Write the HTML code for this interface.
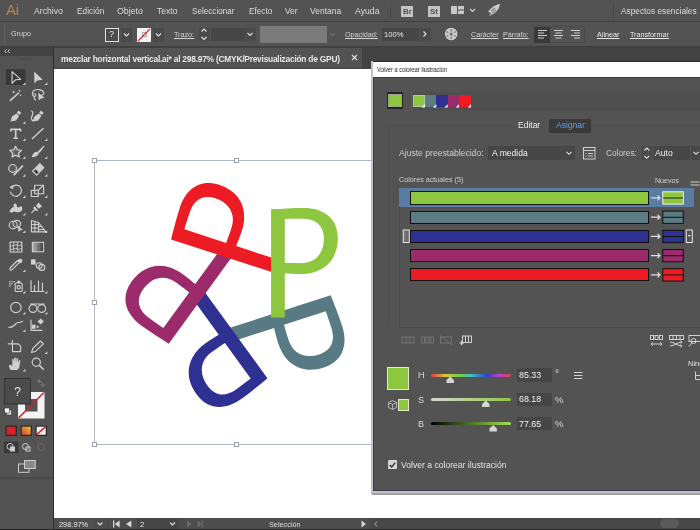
<!DOCTYPE html>
<html><head><meta charset="utf-8">
<style>
*{box-sizing:border-box}
html,body{margin:0;padding:0}
body{width:700px;height:530px;overflow:hidden;position:relative;background:#535353;font-family:"Liberation Sans",sans-serif;color:#d8d8d8}
.a{position:absolute}
.t{position:absolute;white-space:nowrap;line-height:1;will-change:transform}
</style></head><body>
<!-- MENU BAR -->
<div class="a" style="left:0;top:0;width:700px;height:21px;background:#535353"></div>
<div class="a" style="left:0;top:21px;width:700px;height:1px;background:#404040"></div>
<div class="t" style="left:6px;top:2px;font-size:15px;color:#b98257;letter-spacing:-0.3px">Ai</div>
<div class="t" style="left:34px;top:6.89px;font-size:8.64px;color:#dcdcdc">Archivo</div>
<div class="t" style="left:77px;top:7.16px;font-size:8.32px;color:#dcdcdc">Edición</div>
<div class="t" style="left:117px;top:6.75px;font-size:8.80px;color:#dcdcdc">Objeto</div>
<div class="t" style="left:157px;top:6.94px;font-size:8.58px;color:#dcdcdc">Texto</div>
<div class="t" style="left:192px;top:7.8px;font-size:8.15px;color:#dcdcdc">Seleccionar</div>
<div class="t" style="left:248.5px;top:7.8px;font-size:8.20px;color:#dcdcdc">Efecto</div>
<div class="t" style="left:285px;top:7.09px;font-size:8.40px;color:#dcdcdc">Ver</div>
<div class="t" style="left:310px;top:7.00px;font-size:8.51px;color:#dcdcdc">Ventana</div>
<div class="t" style="left:355px;top:6.84px;font-size:8.70px;color:#dcdcdc">Ayuda</div>
<div class="a" style="left:390px;top:4px;width:1px;height:14px;background:#474747"></div>
<div class="a" style="left:401px;top:5.5px;width:12px;height:11px;background:#c4c4c4"></div>
<div class="t" style="left:402.5px;top:7.5px;font-size:8px;font-weight:bold;color:#535353">Br</div>
<div class="a" style="left:427.5px;top:5.5px;width:12px;height:11px;background:#c4c4c4"></div>
<div class="t" style="left:429.5px;top:7.5px;font-size:8px;font-weight:bold;color:#535353">St</div>
<svg class="a" style="left:450px;top:5px" width="30" height="13" viewBox="0 0 30 13">
<rect x="1" y="1" width="6" height="8" fill="#c8c8c8"/><rect x="8" y="1" width="6" height="3.5" fill="#c8c8c8"/><rect x="8" y="5.5" width="6" height="3.5" fill="#c8c8c8"/>
<path d="M20,4 L22.5,6.5 L25,4" stroke="#d0d0d0" stroke-width="1.2" fill="none"/>
</svg>
<svg class="a" style="left:486px;top:3px" width="16" height="15" viewBox="0 0 16 15">
<path d="M14,1 C10,1.5 5,4 2,9 L5,10 L3,13 L7,11 C11,9 13.5,5 14,1 Z" fill="#c8c8c8"/>
<path d="M5,8 L9,5 M6,10 L10,7" stroke="#535353" stroke-width="0.9"/>
</svg>
<div class="a" style="left:612.5px;top:4px;width:1px;height:14px;background:#474747"></div>
<div class="t" style="left:621px;top:7.17px;font-size:8.31px;color:#dcdcdc">Aspectos esenciales</div>
<!-- CONTROL BAR -->
<div class="a" style="left:0;top:22px;width:700px;height:24px;background:#535353"></div>
<div class="a" style="left:0;top:46px;width:700px;height:1px;background:#3e3e3e"></div>
<div class="a" style="left:4px;top:24px;width:1px;height:20px;background:#5e5e5e"></div>
<div class="t" style="left:11px;top:30.2px;font-size:7.2px;color:#d4d4d4">Grupo</div>
<div class="a" style="left:105px;top:27.5px;width:14px;height:14px;border:1.3px solid #e0e0e0;background:#4c4c4c"></div>
<div class="t" style="left:109.3px;top:30.2px;font-size:9px;color:#e0e0e0">?</div>
<div class="a" style="left:121px;top:27.5px;width:11px;height:14px;background:#4a4a4a"></div>
<div class="a" style="left:137px;top:27.5px;width:14px;height:14px;background:#f4f4f4"></div>
<div class="a" style="left:141.8px;top:32.3px;width:5px;height:5px;border:1px solid #aaa"></div>
<svg class="a" style="left:137px;top:27.5px" width="14" height="14"><path d="M1,13 L13,1" stroke="#c52a2e" stroke-width="1.1"/></svg>
<div class="a" style="left:153px;top:27.5px;width:11px;height:14px;background:#4a4a4a"></div>

<div class="t" style="left:174px;top:31.3px;font-size:7.2px;color:#d4d4d4;text-decoration:underline;text-underline-offset:1px">Trazo:</div>
<div class="a" style="left:198.5px;top:27.5px;width:11px;height:13px;background:#4a4a4a"></div>
<div class="a" style="left:210.5px;top:27.5px;width:33px;height:13px;background:#464646"></div>
<div class="a" style="left:244px;top:27.5px;width:12px;height:13px;background:#4a4a4a"></div>
<div class="a" style="left:260px;top:26px;width:66.5px;height:16.5px;background:#7b7b7b"></div>
<div class="t" style="left:345px;top:31.3px;font-size:7.2px;color:#d4d4d4;text-decoration:underline;text-underline-offset:1px">Opacidad:</div>
<div class="a" style="left:381.5px;top:27.5px;width:37px;height:13px;background:#464646"></div>
<div class="t" style="left:384px;top:30.8px;font-size:7.6px;color:#e8e8e8">100%</div>
<div class="a" style="left:419.5px;top:27.5px;width:11px;height:13px;background:#4a4a4a"></div>
<svg class="a" style="left:444px;top:27px" width="15" height="15" viewBox="0 0 15 15">
<circle cx="7.2" cy="7" r="6.2" fill="#cfcfcf"/>
<circle cx="7.2" cy="7" r="1.6" fill="#6a6a6a"/>
<g fill="#8a8a8a"><circle cx="7.2" cy="3.2" r="1.2"/><circle cx="7.2" cy="10.8" r="1.2"/><circle cx="3.6" cy="5.2" r="1.1"/><circle cx="10.8" cy="5.2" r="1.1"/><circle cx="3.6" cy="9" r="1.1"/><circle cx="10.8" cy="9" r="1.1"/></g>
</svg>
<div class="t" style="left:470.5px;top:31.3px;font-size:7.2px;color:#d4d4d4;text-decoration:underline;text-underline-offset:1px">Carácter</div>
<div class="t" style="left:502.5px;top:31.3px;font-size:7.2px;color:#d4d4d4;text-decoration:underline;text-underline-offset:1px">Párrafo:</div>
<div class="a" style="left:533.5px;top:26px;width:51px;height:17px;border:1px solid #4a4a4a"></div>
<div class="a" style="left:534px;top:26.5px;width:16px;height:16px;background:#393939"></div>
<svg class="a" style="left:533px;top:26px" width="52" height="17" viewBox="0 0 52 17">
<g stroke="#cfcfcf" stroke-width="1">
<path d="M5,4.5 H14 M5,7 H11 M5,9.5 H14 M5,12 H11"/>
<path d="M21,4.5 H30 M22.5,7 H28.5 M21,9.5 H30 M22.5,12 H28.5"/>
<path d="M38,4.5 H47 M41,7 H47 M38,9.5 H47 M41,12 H47"/>
</g>
</svg>
<div class="t" style="left:597px;top:31.3px;font-size:7.2px;color:#e8e8e8;text-decoration:underline;text-underline-offset:1px">Alinear</div>
<div class="t" style="left:629.5px;top:31.3px;font-size:7.2px;color:#e8e8e8;text-decoration:underline;text-underline-offset:1px">Transformar</div>
<svg class="a" style="left:0;top:22px" width="700" height="25" viewBox="0 22 700 25">
<g stroke="#e0e0e0" stroke-width="1.1" fill="none">
<path d="M124,33.5 L126.5,36 L129,33.5"/>
<path d="M156,33.5 L158.5,36 L161,33.5"/>
<path d="M201.5,31.5 L204,29 L206.5,31.5"/>
<path d="M201.5,37 L204,39.5 L206.5,37"/>
<path d="M247.5,33 L250,35.5 L252.5,33"/>
<path d="M423.5,31.5 L426,34 L423.5,36.5"/>
</g>
<path d="M330,33 L332.5,35.5 L335,33" stroke="#6e6e6e" stroke-width="1.1" fill="none"/>
</svg>
<!-- TOOLBAR -->
<div class="a" style="left:0;top:47px;width:53px;height:483px;background:#535353"></div>
<div class="a" style="left:0;top:47px;width:53px;height:9px;background:#424242"></div>
<div class="a" style="left:53px;top:47px;width:1px;height:483px;background:#2e2e2e"></div>
<svg class="a" style="left:0;top:47px" width="53" height="483" viewBox="0 47 53 483">
<path d="M6.5,49.3 L4.8,51.2 L6.5,53.1 M9.6,49.3 L7.9,51.2 L9.6,53.1" stroke="#d4d4d4" stroke-width="0.9" fill="none"/>
<rect x="19" y="58.5" width="14" height="1" fill="#4a4a4a"/>
<rect x="5.7" y="69.2" width="19.7" height="15.9" rx="1" fill="#393939"/>
<g fill="none" stroke="#d0d0d0" stroke-width="1.15" stroke-linejoin="round" stroke-linecap="round">
<!-- selection -->
<path d="M12.1,71.6 L12.1,83.4 L15.5,79.8 L20.7,79.4 Z"/>
<!-- wand -->
<path d="M10.4,100.4 L18.6,93" stroke-width="1.5"/>
<!-- lasso -->
<path d="M34.5,96.5 C31.5,95.5 31.8,91 35,90 C38.5,88.8 43,90 43.8,92.5 C44.2,94 43,95 41.5,95.3"/>
<path d="M34,93.5 C36,93.5 36,96 34.5,96.5 C33.5,97 34.5,99 35.5,100"/>
<!-- curvature pen path -->
<path d="M31.3,110.8 C33.5,111.5 33,114 32,116 C31,118.5 31.5,120.5 33.5,121"/>
<!-- T -->
<path d="M10.9,131.4 V129.4 H20.6 V131.4 M15.7,129.4 V138.2 M13.5,138.2 H18" stroke-width="1.6" stroke-linecap="butt"/>
<!-- line -->
<path d="M32.4,138.6 L43.2,128.6" stroke-width="1.3"/>
<!-- star -->
<path d="M15.6,146.3 L17.4,149.9 L21.4,150.4 L18.5,153.2 L19.2,157 L15.6,155.2 L12.1,157 L12.8,153.2 L9.9,150.4 L13.9,149.9 Z" fill="#5e5e5e" stroke-width="1.3"/>
<!-- shaper -->
<circle cx="12.6" cy="168.4" r="3.9" fill="#5e5e5e"/>
<!-- eraser -->
<path d="M32.6,171.2 L39.8,163.6 L43.8,167.6 L36.6,175.2 Z" fill="#cfcfcf"/>
<path d="M33.6,171.3 L35.6,169.2 L38.6,172.2 L36.6,174.3 Z" fill="#3a3a3a" stroke="none"/>
<!-- rotate -->
<path d="M11.3,187.8 C13.5,184.5 18.5,184 20.6,187.5 C22.5,190.5 21,195 17.5,196"/>
<path d="M17.5,196.2 C14.5,196.8 11,195 10.3,191.5" stroke-dasharray="1.4 1.1"/>
<!-- scale -->
<rect x="31.3" y="190.3" width="7" height="6.2"/>
<rect x="34.6" y="185.2" width="9" height="8.5"/>
<path d="M38.5,190 L42.5,186.2"/>
<!-- shape builder -->
<ellipse cx="13.2" cy="225" rx="4" ry="3.8"/>
<ellipse cx="16.8" cy="223.8" rx="3.8" ry="3.4"/>
<!-- perspective grid -->
<path d="M31.5,220.5 V231.8 H45.8 M31.5,220.5 L38.5,222.5 V231.8 M31.5,224.5 H38.5 M31.5,228 H38.5 M34.8,221.5 V231.8 M38.5,222.5 L45.8,231.8 M38.5,226.5 L42,226.5 M38.5,229.5 H44"/>
<!-- mesh -->
<rect x="10.1" y="242" width="11.7" height="10"/>
<path d="M10.5,246 C13,247.5 15,243.5 17,245 C19,246.5 20,244 21.8,245.5 M10.5,249.5 C13,250 15,247.5 17.5,249 C19.5,250 20.5,248 21.8,249 M13.5,242 C14.5,245 12.5,248 14,252 M17.5,242 C18,245 16.5,248.5 18,252" stroke-width="0.9"/>
<!-- eyedropper -->
<path d="M10.4,270 C9.5,269.2 9.8,268.3 10.5,267.5 L17.5,260.5 L19.4,262.4 L12.4,269.4 C11.6,270.1 11,270.5 10.4,270 Z"/>
<!-- blend -->
<circle cx="39.2" cy="265.6" r="2.9"/><circle cx="41.8" cy="267.4" r="3"/>
<!-- symbol sprayer -->
<rect x="15.2" y="283" width="7" height="8.5" rx="1"/>
<circle cx="18.7" cy="287.3" r="1.7"/>
<!-- graph -->
<path d="M31,280.5 V291.5 H44 M34.5,291 V285.5 M38.5,291 V281 M42.4,291 V283"/>
<!-- puppet/width -->
<circle cx="15.9" cy="307.5" r="5.2"/>
<circle cx="33" cy="308.5" r="3.9"/><circle cx="41.7" cy="308.5" r="3.9"/><path d="M30.5,304 H44.2"/>
<!-- wave -->
<path d="M8.8,327.5 C11,327.5 12.5,327 14,325.5 C15.5,324 16.5,322.5 18.5,322.5 C20,322.5 21,322.2 22.5,321.2"/>
<!-- live paint -->
<path d="M31,320 V330.3 H42"/>
<!-- artboard -->
<path d="M12.3,340.4 V343.8 M8.3,343.8 H12 M12.5,343.8 V351.6 H20.6 V346.2 L18.2,343.8 Z"/>
<!-- knife -->
<path d="M31.6,352.5 L32.8,348.5 L40.5,341 L43.3,343.8 L35.8,351.2 Z"/>
<!-- zoom -->
<circle cx="36.3" cy="362.3" r="4.1"/><path d="M39.3,365.3 L43.3,369.3" stroke-width="1.6"/>
</g>
<g fill="#d0d0d0">
<path d="M34.1,71.4 L34.5,83.6 L37.1,80.5 L42.8,79.8 Z"/>
<path d="M13.6,90.2 L14.1,91.4 L15.3,91.9 L14.1,92.4 L13.6,93.6 L13.1,92.4 L11.9,91.9 L13.1,91.4 Z"/>
<path d="M19.7,89.4 L20.1,90.4 L21.1,90.8 L20.1,91.2 L19.7,92.2 L19.3,91.2 L18.3,90.8 L19.3,90.4 Z"/>
<circle cx="20.5" cy="95.3" r="0.8"/>
<path d="M38.2,92.5 L44.6,98 L41.5,98.2 L38.7,100.6 Z"/>
<path d="M10.5,121.5 L12,116.5 L16.5,113.5 L19,116 L16,120.5 Z"/>
<path d="M16.8,112.8 L18.7,110.4 L21.4,113.1 L19,115 Z"/>
<path d="M32.8,121.5 L34.3,116.5 L38.8,113.5 L41.3,116 L38.3,120.5 Z"/>
<path d="M39.1,112.8 L41,110.4 L43.7,113.1 L41.3,115 Z"/>
<path d="M43.8,145.5 L44.5,146.3 L39.5,153 L37.8,151.5 Z"/>
<path d="M38,152 C36,151 33.5,152.5 32.2,155.5 L31.8,157.2 C34,157.4 37,156.5 38.3,154.5 C39,153.5 38.8,152.6 38,152 Z"/>
<path d="M13.3,174.3 L22.2,165 L23.5,166.3 L14.6,175.6 C14,175.9 13,175.2 13.3,174.3 Z"/>
<path d="M9.5,186.8 L13.5,185.2 L12.8,189.6 Z"/>
<path d="M9.3,211.5 C10.5,209 12.5,207 14,206.5 C13,205 13.5,203.5 15,203.5 C16.5,203.5 17,205 16.8,206.5 C18,208 19.5,207.5 21,206 C22.5,207 22.8,209.5 21.5,211 C19.5,212.8 16,212.5 14,211.5 C12.5,212.8 11,213.2 9.3,211.5 Z"/>
<path d="M36,206 L38.5,202.6 L42,206.2 L38.8,208.8 Z"/>
<path d="M34.5,206.3 L38.3,210.5 L36,211 L33.2,208 Z"/>
<path d="M34.8,209.5 L31.4,212.8" stroke="#d0d0d0" stroke-width="1.1"/>
<path d="M17.8,225.8 L23.1,230 L20.4,230.2 L18.6,231.9 Z"/>
<path d="M18.5,259.5 C19.5,258.5 21,258.5 21.8,259.3 C22.6,260.1 22.6,261.5 21.6,262.5 L20.5,263.4 L17.6,260.5 Z"/>
<rect x="31" y="259.3" width="4.6" height="5.3"/>
<rect x="9.1" y="281" width="1.3" height="1.3"/><rect x="11.3" y="281" width="1.3" height="1.3"/><rect x="13.5" y="281" width="1.3" height="1.3"/>
<rect x="9.1" y="283.2" width="1.3" height="1.3"/><rect x="11.3" y="283.2" width="1.3" height="1.3"/>
<rect x="9.1" y="285.4" width="1.3" height="1.3"/>
<rect x="17.3" y="280.8" width="3" height="2.2"/>
<rect x="31.8" y="324.7" width="3.8" height="4.1"/>
<path d="M37.5,321.5 L40.7,318.5 L43.9,321.5 L40.7,324.5 Z"/>
<rect x="36.7" y="325.8" width="2" height="2"/>
<path d="M10.2,369.6 C9,367.5 8.5,365.5 9.8,364.8 C10.8,364.3 11.8,365.5 12.3,366.3 L12.2,359.8 C12.2,358.7 13.8,358.7 13.8,359.8 L14,363 L14.2,358.3 C14.3,357.3 15.8,357.3 15.8,358.3 L16,363 L16.4,358.8 C16.5,357.8 18,357.8 18,358.8 L18,363.3 L18.8,360.5 C19.1,359.6 20.5,359.9 20.3,360.9 L19.6,365.5 C19.2,368 18.2,369.6 17,370 L11.5,370 Z"/>
</g>
<defs><linearGradient id="gr" x1="0" x2="1" y1="0" y2="0"><stop offset="0" stop-color="#b8b8b8"/><stop offset="1" stop-color="#3a3a3a"/></linearGradient></defs>
<rect x="32.3" y="242.3" width="11.3" height="9.5" fill="url(#gr)" stroke="#d4d4d4" stroke-width="1"/>
<g fill="#d0d0d0">
<path d="M22.7,85 L25.4,82.3 V85 Z"/><path d="M44.7,85 L47.3,82.3 V85 Z"/>
<path d="M22.7,124 L25.4,121.3 V124 Z"/>
<path d="M22.7,141 L25.4,138.3 V141 Z"/><path d="M44.7,141 L47.3,138.3 V141 Z"/>
<path d="M22.7,159 L25.4,156.3 V159 Z"/><path d="M44.7,159 L47.3,156.3 V159 Z"/>
<path d="M22.7,176.7 L25.4,174 V176.7 Z"/><path d="M44.7,176.7 L47.3,174 V176.7 Z"/>
<path d="M22.7,198 L25.4,195.3 V198 Z"/><path d="M44.7,198 L47.3,195.3 V198 Z"/>
<path d="M22.7,215.5 L25.4,212.8 V215.5 Z"/><path d="M44.7,215.5 L47.3,212.8 V215.5 Z"/>
<path d="M22.7,233 L25.4,230.3 V233 Z"/><path d="M44.7,233 L47.3,230.3 V233 Z"/>
<path d="M22.7,272 L25.4,269.3 V272 Z"/>
<path d="M22.7,293.5 L25.4,290.8 V293.5 Z"/><path d="M44.7,293.5 L47.3,290.8 V293.5 Z"/>
<path d="M22.7,314.5 L25.4,311.8 V314.5 Z"/><path d="M44.7,314.5 L47.3,311.8 V314.5 Z"/>
<path d="M22.7,332 L25.4,329.3 V332 Z"/>
<path d="M44.7,354 L47.3,351.3 V354 Z"/>
<path d="M22.7,371.5 L25.4,368.8 V371.5 Z"/>
</g>
<!-- fill/stroke -->
<rect x="18" y="392" width="26.5" height="26.5" fill="#f4f4f4"/>
<rect x="25" y="399" width="12.5" height="12.5" fill="#535353"/>
<path d="M18.5,418 L44,392.5" stroke="#c9262c" stroke-width="1.6"/>
<rect x="4.5" y="378.5" width="26" height="25.5" fill="#4b4b4b" stroke="#333" stroke-width="1"/>
<text x="17.5" y="395.5" font-size="12" text-anchor="middle" fill="#e8e8e8" font-family="Liberation Sans">?</text>
<path d="M38,381 C41,381 43,383 43,386 M41,384.5 L43,386.5 L45,384.5 M40,379.5 L38,381 L40,382.5" stroke="#8a8a8a" stroke-width="0.9" fill="none"/>
<rect x="6.5" y="410" width="5" height="5" fill="#e8e8e8" stroke="#333" stroke-width="0.6"/>
<rect x="4.5" y="408" width="5" height="5" fill="#f4f4f4" stroke="#333" stroke-width="0.6"/>
<rect x="5.5" y="425.5" width="11.5" height="10.5" fill="#2a2a2a"/>
<rect x="6.7" y="426.7" width="9" height="8" fill="#e21e26"/>
<rect x="20.5" y="425.5" width="11.5" height="10.5" fill="#2a2a2a"/>
<defs><linearGradient id="g2" x1="0" x2="1" y1="1" y2="0"><stop offset="0" stop-color="#d8442a"/><stop offset="1" stop-color="#f0c030"/></linearGradient></defs>
<rect x="21.7" y="426.7" width="9" height="8" fill="url(#g2)"/>
<rect x="35.5" y="425.5" width="11.5" height="10.5" fill="#2a2a2a"/>
<rect x="36.7" y="426.7" width="9" height="8" fill="#f4f4f4"/>
<path d="M36.7,434.7 L45.7,426.7" stroke="#d8232a" stroke-width="1.6"/>
<rect x="4" y="441.5" width="14.5" height="11.5" fill="#393939"/>
<g fill="none" stroke="#cdcdcd" stroke-width="1">
<circle cx="10" cy="446.5" r="3"/><rect x="10.5" y="447" width="4" height="4" fill="#cdcdcd"/>
<circle cx="25.5" cy="446.5" r="3"/><rect x="26" y="447" width="4" height="4"/>
<circle cx="41" cy="447" r="3.5" stroke="#6a6a6a"/>
<rect x="18.5" y="464" width="10.5" height="8.3"/><rect x="24.5" y="460.5" width="10.8" height="8" fill="#8a8a8a"/>
</g>
<rect x="0" y="477.5" width="53" height="1" fill="#404040"/>
</svg>
<!-- TAB BAR -->
<div class="a" style="left:54px;top:47px;width:646px;height:21px;background:#424242"></div>
<div class="a" style="left:54px;top:48px;width:308px;height:20px;background:#535353"></div>
<div class="t" style="left:61px;top:54.5px;font-size:8.4px;letter-spacing:-0.23px;font-weight:bold;color:#e8e8e8">mezclar horizontal vertical.ai* al 298.97% (CMYK/Previsualización de GPU)</div>
<svg class="a" style="left:350px;top:53px" width="9" height="9" viewBox="0 0 9 9"><path d="M2,2 L7,7 M7,2 L2,7" stroke="#e0e0e0" stroke-width="1.1"/></svg>
<!-- CANVAS -->
<div class="a" style="left:54px;top:68px;width:646px;height:1px;background:#464646"></div>
<div class="a" style="left:54px;top:68.6px;width:646px;height:449px;background:#ffffff"></div>
<!-- STATUS BAR -->
<div class="a" style="left:54px;top:517.5px;width:646px;height:11.5px;background:#484848"></div>
<div class="a" style="left:54px;top:517.5px;width:315.5px;height:11.5px;background:#4d4d4d"></div>
<div class="a" style="left:369.5px;top:517.5px;width:1px;height:11.5px;background:#4a4a4a"></div>
<div class="a" style="left:56.5px;top:518px;width:37.5px;height:10.5px;background:#505050"></div>
<div class="t" style="left:59px;top:521.3px;font-size:7.4px;color:#e4e4e4">298.97%</div>
<div class="a" style="left:136.8px;top:518px;width:42px;height:10.5px;background:#464646"></div>
<div class="t" style="left:140px;top:521.3px;font-size:7.6px;color:#e4e4e4">2</div>
<div class="t" style="left:268.6px;top:521px;font-size:7.3px;color:#dcdcdc">Selección</div>
<div class="a" style="left:659.5px;top:518.5px;width:19px;height:9.5px;border-radius:5px;background:#5a5a5a"></div>
<svg class="a" style="left:54px;top:518.2px" width="330" height="13" viewBox="54 517 330 13">
<g stroke="#e0e0e0" stroke-width="1.1" fill="none">
<path d="M97.5,521.5 L100,524 L102.5,521.5"/>
<path d="M170,521.5 L172.5,524 L175,521.5"/>
<path d="M377,520.5 L375,523 L377,525.5" stroke="#9a9a9a"/>
</g>
<g fill="#d8d8d8">
<rect x="113" y="519.5" width="1.3" height="7"/><path d="M119.6,519.5 V526.5 L114.8,523 Z"/>
<path d="M131.4,519.5 V526.5 L126,523 Z"/>
<path d="M361.5,519.5 V526.5 L366,523 Z"/>
</g>
<g fill="#6c6c6c">
<path d="M187,519.5 V526.5 L191.4,523 Z"/>
<path d="M197.7,519.5 V526.5 L201.5,523 Z"/><rect x="201.6" y="519.5" width="1.3" height="7"/>
</g>
<rect x="107.5" y="518" width="1" height="10.5" fill="#474747"/>
</svg>
<div class="a" style="left:0;top:529px;width:700px;height:1px;background:#262626"></div>

<!-- ARTWORK -->
<svg class="a" style="left:0;top:0" width="700" height="530" viewBox="0 0 700 530">
<defs>
<path id="P" fill-rule="evenodd" d="M0,0.7 L0,109 L13.7,109 L13.7,64.6 C18,65 24,65.4 30,65.4 C52,65.4 66.7,52 66.7,29.5 C66.7,9 52,-0.7 33,-0.7 C22,-0.7 10,0 0,0.7 Z M13.7,10.3 C19,10.1 25,10.1 31,10.1 C45,10.1 52.8,17 52.8,30 C52.8,45 44,54.6 30,54.6 C24,54.6 18,54.4 13.7,54.2 Z"/>
</defs>
<g fill="none" stroke="#aeb6c6" stroke-width="1">
<rect x="94.5" y="160.5" width="286" height="284"/>
</g>
<g fill="#fff" stroke="#98a0ae" stroke-width="1">
<rect x="92.5" y="158.5" width="4" height="4"/>
<rect x="234.5" y="158.5" width="4" height="4"/>
<rect x="92.5" y="300.5" width="4" height="4"/>
<rect x="92.5" y="442.5" width="4" height="4"/>
<rect x="234.5" y="442.5" width="4" height="4"/>
</g>
<g transform="rotate(72 241.8 293.2)"><use href="#P" x="271.1" y="208.6" fill="#587a84"/></g>
<g transform="rotate(144 241.8 293.2)"><use href="#P" x="271.1" y="208.6" fill="#2e3192"/></g>
<g transform="rotate(216 241.8 293.2)"><use href="#P" x="271.1" y="208.6" fill="#9b2b6b"/></g>
<g transform="rotate(288 241.8 293.2)"><use href="#P" x="271.1" y="208.6" fill="#ed1c24"/></g>
<use href="#P" x="271.1" y="208.6" fill="#8dc63f"/>
</svg>

<!-- DIALOG -->
<div class="a" style="left:372px;top:61px;width:328px;height:430px;background:#535353"></div>
<div class="a" style="left:372px;top:61px;width:328px;height:1px;background:#2c2a36"></div>
<div class="a" style="left:372px;top:62px;width:328px;height:14.5px;background:#ffffff"></div>
<div class="a" style="left:372px;top:76.5px;width:328px;height:1px;background:#3c3c3c"></div>
<div class="a" style="left:371px;top:61px;width:1.5px;height:433px;background:#c4c0d4"></div>
<div class="a" style="left:372.5px;top:77px;width:1px;height:413px;background:#3e3a4c"></div>
<div class="a" style="left:372.5px;top:489.5px;width:327.5px;height:1px;background:#3e3a4c"></div>
<div class="a" style="left:372px;top:490.5px;width:328px;height:2px;background:#c4c0d4"></div>
<div class="a" style="left:372px;top:493px;width:328px;height:1.5px;background:#a0a0a0"></div>
<div class="t" style="left:376.6px;top:66.6px;font-size:6.9px;letter-spacing:-0.05px;color:#202020;transform:scaleX(0.84);transform-origin:0 0">Volver a colorear ilustración</div>
<!-- swatch row -->
<div class="a" style="left:387px;top:92.3px;width:16.2px;height:16.3px;background:#262626;border-radius:1px"></div>
<div class="a" style="left:388.2px;top:93.5px;width:13.8px;height:13.9px;background:#9aa58a"></div>
<div class="a" style="left:389.5px;top:94.8px;width:11.2px;height:11.3px;background:#8dc63f"></div>
<div class="a" style="left:410.5px;top:91.5px;width:289.5px;height:19px;background:#4f4f4f;border-left:1px solid #616161"></div>
<div class="a" style="left:412.8px;top:94.7px;width:12px;height:12.7px;background:#8dc63f;border:1px solid #b8c8a0"></div>
<div class="a" style="left:424.8px;top:94.7px;width:11.5px;height:12.7px;background:#5b7c82"></div>
<div class="a" style="left:436.3px;top:94.7px;width:11.3px;height:12.7px;background:#2e3192"></div>
<div class="a" style="left:447.6px;top:94.7px;width:11.4px;height:12.7px;background:#9b2b6b"></div>
<div class="a" style="left:459px;top:94.7px;width:12px;height:12.7px;background:#ed1c24"></div>
<svg class="a" style="left:410px;top:94px" width="64" height="15" viewBox="410 94 64 15">
<g fill="#fff"><path d="M421.5,107.4 L424.8,104.2 V107.4 Z"/><path d="M433,107.4 L436.3,104.2 V107.4 Z"/><path d="M444.4,107.4 L447.6,104.2 V107.4 Z"/><path d="M455.8,107.4 L459,104.2 V107.4 Z"/><path d="M467.8,107.4 L471,104.2 V107.4 Z"/></g>
</svg>
<!-- inner panel -->
<div class="a" style="left:387.5px;top:125px;width:312.5px;height:202px;border-top:1px solid #4e4e4e;border-left:1px solid #4e4e4e"></div>
<div class="a" style="left:509.5px;top:118.5px;width:39.5px;height:14px;background:#535353"></div>
<div class="a" style="left:549px;top:118.5px;width:42px;height:14px;background:#3a3a3a"></div>
<div class="t" style="left:517.7px;top:121.2px;font-size:8.5px;color:#ececec">Editar</div>
<div class="t" style="left:555.5px;top:121.2px;font-size:8.5px;color:#5e9de6">Asignar</div>
<div class="t" style="left:399px;top:149px;font-size:8.6px;color:#cfcfcf">Ajuste preestablecido:</div>
<div class="a" style="left:488px;top:146.4px;width:87px;height:13.5px;background:#474747"></div>
<div class="t" style="left:491.6px;top:149px;font-size:8.6px;color:#f0f0f0">A medida</div>
<div class="t" style="left:605.7px;top:149px;font-size:8.3px;color:#cfcfcf">Colores:</div>
<div class="a" style="left:641.7px;top:146.4px;width:10.3px;height:13.5px;background:#4a4a4a"></div>
<div class="a" style="left:653.4px;top:146.4px;width:36.3px;height:13.5px;background:#474747"></div>
<div class="t" style="left:655px;top:149px;font-size:8.6px;color:#f0f0f0">Auto</div>
<div class="a" style="left:691px;top:146.4px;width:9px;height:13.5px;background:#474747"></div>
<svg class="a" style="left:560px;top:144px" width="140" height="18" viewBox="560 144 140 18">
<g stroke="#e4e4e4" stroke-width="1.1" fill="none">
<path d="M566.5,151.8 L569,154.3 L571.5,151.8"/>
<path d="M644.3,150.5 L646.8,148 L649.3,150.5"/>
<path d="M644.3,155.8 L646.8,158.3 L649.3,155.8"/>
<path d="M693.5,151.8 L696,154.3 L698.5,151.8"/>
</g>
<g fill="none" stroke="#cfcfcf" stroke-width="1">
<rect x="583.5" y="147.5" width="11.5" height="11.5"/>
<path d="M583.5,150.5 H595"/>
<path d="M585.5,153.5 H586.5 M588,153.5 H593 M585.5,156 H586.5 M588,156 H593"/>
</g>
</svg>
<div class="t" style="left:398.5px;top:176px;font-size:7.2px;color:#d0d0d0">Colores actuales (5)</div>
<div class="t" style="left:654.6px;top:177.6px;font-size:7.1px;color:#d0d0d0">Nuevos</div>
<!-- list -->
<div class="a" style="left:398.7px;top:188.3px;width:1px;height:139px;background:#4b4b4b"></div>
<div class="a" style="left:398.7px;top:326.9px;width:301.3px;height:1px;background:#4b4b4b"></div>
<div class="a" style="left:398.7px;top:188.3px;width:295.3px;height:18.7px;background:#5a7ba2"></div>
<div class="a" style="left:409.5px;top:191.3px;width:239.2px;height:13.3px;background:#8dc63f;border:1px solid #111"></div>
<div class="a" style="left:409.5px;top:210.6px;width:239.2px;height:13.3px;background:#5b7c82;border:1px solid #111"></div>
<div class="a" style="left:409.5px;top:229.8px;width:239.2px;height:13.3px;background:#2e3192;border:1px solid #111"></div>
<div class="a" style="left:409.5px;top:249px;width:239.2px;height:13.3px;background:#9b2b6b;border:1px solid #111"></div>
<div class="a" style="left:409.5px;top:268.2px;width:239.2px;height:13.3px;background:#ed1c24;border:1px solid #111"></div>
<svg class="a" style="left:372px;top:180px" width="328" height="170" viewBox="372 180 328 170">
<g stroke="#e0e0e0" stroke-width="1.2" fill="none">
<path d="M651,197.9 H660 M657.5,195.4 L660,197.9 L657.5,200.4"/>
<path d="M651,217.2 H660 M657.5,214.7 L660,217.2 L657.5,219.7"/>
<path d="M651,236.4 H660 M657.5,233.9 L660,236.4 L657.5,238.9"/>
<path d="M651,255.6 H660 M657.5,253.1 L660,255.6 L657.5,258.1"/>
<path d="M651,274.8 H660 M657.5,272.3 L660,274.8 L657.5,277.3"/>
</g>
<g stroke="#111" stroke-width="1">
<rect x="662.8" y="191.8" width="20.5" height="12.3" fill="#8dc63f" stroke="#f0f0f0"/>
<path d="M663.3,198 H683" stroke="#222"/>
<rect x="662.8" y="211.1" width="20.5" height="12.3" fill="#5b7c82"/>
<path d="M663.3,217.3 H683"/>
<rect x="662.8" y="230.3" width="20.5" height="12.3" fill="#2e3192"/>
<path d="M663.3,236.5 H683"/>
<rect x="662.8" y="249.5" width="20.5" height="12.3" fill="#9b2b6b"/>
<path d="M663.3,255.7 H683"/>
<rect x="662.8" y="268.7" width="20.5" height="12.3" fill="#ed1c24"/>
<path d="M663.3,274.9 H683"/>
</g>
<rect x="403.3" y="230" width="6" height="12.5" fill="#6a6a6a" stroke="#e8e8e8" stroke-width="1"/>
<path d="M405,233 V240" stroke="#aaa" stroke-width="0.8" stroke-dasharray="1 0.6"/>
<rect x="686.3" y="230" width="6" height="12.5" fill="#535353" stroke="#e8e8e8" stroke-width="1"/>
<path d="M687.8,235 L689.3,237 L690.8,235 Z" fill="#e8e8e8"/>
<g stroke="#cfcfcf" stroke-width="1.1"><path d="M690.5,179 H699.5 M690.5,182 H699.5 M690.5,185 H699.5"/></g>
<!-- bottom icons -->
<g fill="none" stroke="#777" stroke-width="0.9">
<rect x="402" y="337" width="12" height="6"/><path d="M406,337 V343 M410,337 V343"/>
<rect x="421.5" y="337" width="3" height="6"/><rect x="426" y="337" width="3" height="6"/><rect x="430.5" y="337" width="3" height="6"/>
<rect x="440.5" y="337" width="11" height="6"/><path d="M440,335.5 L452,345"/>
</g>
<g fill="none" stroke="#dcdcdc" stroke-width="0.9">
<rect x="462.5" y="336" width="9" height="6.5"/><path d="M465.5,336 V342.5 M468.5,336 V342.5"/>
<path d="M459.5,343 H464 M461.7,340.8 V345.2" stroke-width="1.2"/>
<rect x="650.5" y="335.5" width="3" height="4"/><rect x="655" y="335.5" width="3" height="4"/><rect x="659.5" y="335.5" width="3" height="4"/>
<path d="M651,344 H662 M652.8,342.3 L651,344 L652.8,345.7 M660.2,342.3 L662,344 L660.2,345.7"/>
<rect x="669.5" y="335.5" width="14" height="4"/><path d="M673,335.5 V339.5 M676.5,335.5 V339.5 M680,335.5 V339.5"/>
<path d="M670,342 C674,342 678,346 682,346 M670,346 C674,346 678,342 682,342 M680.5,340.8 L682,342 L680.5,343.2 M680.5,344.8 L682,346 L680.5,347.2"/>
<rect x="689" y="335.5" width="12" height="6"/><circle cx="693.5" cy="341" r="2.5"/><path d="M691.7,343 L689,346.5"/>
</g>
</svg>
<!-- HSB -->
<div class="a" style="left:387.2px;top:367px;width:22.1px;height:22.8px;background:#8dc63f;border:1px solid #dfe8c8"></div>
<div class="a" style="left:398px;top:399.4px;width:11.3px;height:11.7px;background:#8dc63f;border:1px solid #dfe8c8"></div>
<div class="t" style="left:417.5px;top:371px;font-size:9px;color:#dadada">H</div>
<div class="t" style="left:417.5px;top:395.5px;font-size:9px;color:#dadada">S</div>
<div class="t" style="left:417.5px;top:419.5px;font-size:9px;color:#dadada">B</div>
<div class="a" style="left:430.5px;top:373.5px;width:80.4px;height:3px;border-radius:1.5px;background:linear-gradient(90deg,#d84040,#e0c040 18%,#70d040 35%,#40c0c0 50%,#3040c8 70%,#c040c8 85%,#d84050)"></div>
<div class="a" style="left:430.5px;top:397.5px;width:80.4px;height:3px;border-radius:1.5px;background:linear-gradient(90deg,#d8d8d8,#8dc63f)"></div>
<div class="a" style="left:430.5px;top:422px;width:80.4px;height:3px;border-radius:1.5px;background:linear-gradient(90deg,#000,#406020 40%,#a0e050)"></div>
<svg class="a" style="left:372px;top:360px" width="328" height="80" viewBox="372 360 328 80">
<g fill="#d6d6d6">
<path d="M446.5,383 V380 L450.2,376.5 L453.9,380 V383 Z"/>
<path d="M482.1,407 V404 L485.8,400.5 L489.5,404 V407 Z"/>
<path d="M489.5,431.5 V428.5 L493.2,425 L496.9,428.5 V431.5 Z"/>
</g>
<g fill="none" stroke="#bdbdbd" stroke-width="0.9">
<path d="M388.5,402.5 L392.5,400.5 L396.5,402.5 V407.5 L392.5,409.5 L388.5,407.5 Z M388.5,402.5 L392.5,404.5 L396.5,402.5 M392.5,404.5 V409.5"/>
</g>
<g stroke="#d0d0d0" stroke-width="1.1"><path d="M574,372.5 H582.5 M574,375.5 H582.5 M574,378.5 H582.5"/></g>
<path d="M695.5,371.5 V379.5 H700 M695.5,375.5 H700" stroke="#d0d0d0" stroke-width="1" fill="none"/>
</svg>
<div class="a" style="left:517.4px;top:368px;width:34.3px;height:13.6px;background:#464646"></div>
<div class="a" style="left:517.4px;top:392.5px;width:34.3px;height:13px;background:#464646"></div>
<div class="a" style="left:517.4px;top:417px;width:34.3px;height:12.5px;background:#464646"></div>
<div class="t" style="left:519.3px;top:371px;font-size:8.9px;color:#f0f0f0">85.33</div>
<div class="t" style="left:519.3px;top:395.2px;font-size:8.9px;color:#f0f0f0">68.18</div>
<div class="t" style="left:519.3px;top:419.5px;font-size:8.9px;color:#f0f0f0">77.65</div>
<div class="t" style="left:554.5px;top:369px;font-size:10px;color:#d6d6d6">°</div>
<div class="t" style="left:555px;top:394.5px;font-size:9.6px;color:#d6d6d6">%</div>
<div class="t" style="left:555px;top:419px;font-size:9.6px;color:#d6d6d6">%</div>
<div class="t" style="left:688px;top:359.5px;font-size:7.5px;color:#e0e0e0">Ning</div>
<!-- checkbox -->
<div class="a" style="left:388px;top:460.1px;width:9px;height:9.2px;background:#d4d4d4;border-radius:1px"></div>
<svg class="a" style="left:388px;top:460px" width="9" height="10"><path d="M1.8,5 L3.7,7 L7.3,2.6" stroke="#2a2a2a" stroke-width="1.3" fill="none"/></svg>
<div class="t" style="left:400.7px;top:460.8px;font-size:8.6px;color:#e4e4e4">Volver a colorear ilustración</div>
</body></html>
